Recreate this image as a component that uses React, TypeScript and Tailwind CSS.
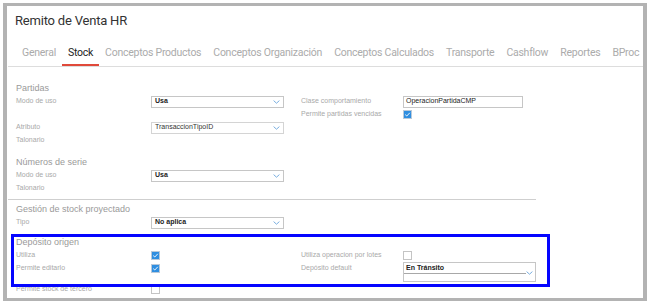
import React from "react";

const lab = "h-[13px] flex items-center text-[7px] text-[#a9a9a9] whitespace-nowrap";
const cell = "h-[13px] flex items-center";
const secTitle = "h-[12px] flex items-center text-[9px] text-[#9a9a9a] whitespace-nowrap";
const grid = "grid grid-cols-[135px_133px_17px_102px_133px] items-start";

function Chevron() {
  return (
    <svg width="7" height="4" viewBox="0 0 7 4" className="shrink-0">
      <path d="M0.6 0.6 L3.5 3.2 L6.4 0.6" fill="none" stroke="#6aa5dc" strokeWidth="0.9" />
    </svg>
  );
}

function Select({ value, bold = true, light = false }: { value: string; bold?: boolean; light?: boolean }) {
  return (
    <div
      className={
        light
          ? "h-[12px] w-[133px] border border-[#d4d4d4] flex items-center justify-between pl-[3px] pr-[3px]"
          : "h-[12px] w-[133px] border border-[#c6c6c6] flex items-center justify-between pl-[3px] pr-[3px]"
      }
    >
      <span className={bold ? "text-[7px] font-bold text-[#222]" : "text-[7px] text-[#333]"}>{value}</span>
      <Chevron />
    </div>
  );
}

function Check({ checked }: { checked: boolean }) {
  if (!checked)
    return <div className="w-[9px] h-[9px] border border-[#c4c4c4] bg-white" />;
  return (
    <div className="w-[9px] h-[9px] bg-[#2f8ee0] border border-[#b9c9d9] flex items-center justify-center">
      <svg width="7" height="7" viewBox="0 0 7 7">
        <path d="M1.2 3.6 L2.8 5 L5.8 1.8" fill="none" stroke="#ffffff" strokeWidth="0.9" />
      </svg>
    </div>
  );
}

const tabs = [
  "General",
  "Stock",
  "Conceptos Productos",
  "Conceptos Organización",
  "Conceptos Calculados",
  "Transporte",
  "Cashflow",
  "Reportes",
  "BProc",
];

export default function App() {
  return (
    <div className="w-[650px] h-[305px] bg-white pt-[3px] pl-[3px] font-['Liberation_Sans',Arial,sans-serif] overflow-hidden">
      <div className="relative w-[644px] h-[298px] border-t-[3px] border-b-[3px] border-l-[4px] border-r-[4px] border-[#b3b3b3] bg-white overflow-hidden">
        <div className="pl-[8px] pt-[7px] h-[23px] flex items-center font-[Roboto,sans-serif] text-[13px] text-[#333] tracking-[-0.2px]">
          Remito de Venta HR
        </div>
        <div className="mt-[17px] ml-[1px] border-b border-[#dddddd] flex pl-[8px] font-[Roboto,sans-serif] text-[10.5px] tracking-[-0.25px] whitespace-nowrap">
          {tabs.map((t) => (
            <div
              key={t}
              className={
                t === "Stock"
                  ? "px-[6px] pb-[4px] border-b-2 border-[#e0493a] text-[#222] leading-[14px]"
                  : "px-[6px] pb-[4px] border-b-2 border-transparent text-[#ababab] leading-[14px]"
              }
            >
              {t}
            </div>
          ))}
        </div>

        <div className="pl-[9px] pt-[16px]">
          <div className={secTitle}>Partidas</div>
          <div className={grid}>
            <div className={lab}>Modo de uso</div>
            <div className={cell}><Select value="Usa" /></div>
            <div />
            <div className={lab}>Clase comportamiento</div>
            <div className={cell}>
              <div className="h-[12px] w-[120px] border border-[#c6c6c6] flex items-center pl-[2px] text-[7px] text-[#222]">
                OperacionPartidaCMP
              </div>
            </div>

            <div className={lab}></div>
            <div />
            <div />
            <div className={lab}>Permite partidas vencidas</div>
            <div className={cell}><Check checked /></div>

            <div className={lab}>Atributo</div>
            <div className={cell}><Select value="TransaccionTipoID" bold={false} light /></div>
            <div />
            <div />
            <div />

            <div className={lab}>Talonario</div>
            <div />
            <div />
            <div />
            <div />
          </div>

          <div className="mt-[10px]">
            <div className={secTitle}>Números de serie</div>
          </div>
          <div className={grid}>
            <div className={lab}>Modo de uso</div>
            <div className={cell}><Select value="Usa" /></div>
            <div />
            <div />
            <div />
            <div className={lab}>Talonario</div>
            <div />
            <div />
            <div />
            <div />
          </div>

          <div className="mt-[4px] -ml-[8px] w-[528px] h-px bg-[#cfcfcf]" />

          <div className="mt-[4px]">
            <div className={secTitle}>Gestión de stock proyectado</div>
          </div>
          <div className={grid}>
            <div className={lab}>Tipo</div>
            <div className={cell}><Select value="No aplica" /></div>
            <div />
            <div />
            <div />
          </div>

          <div className="mt-[8px]">
            <div className={secTitle}>Depósito origen</div>
          </div>
          <div className={grid}>
            <div className={lab}>Utiliza</div>
            <div className={cell}><Check checked /></div>
            <div />
            <div className={lab}>Utiliza operacion por lotes</div>
            <div className={cell}><Check checked={false} /></div>

            <div className={lab}>Permite editarlo</div>
            <div className={cell}><Check checked /></div>
            <div />
            <div className={lab}>Depósito default</div>
            <div className="relative h-[20px] w-[133px] border border-[#c6c6c6]">
              <div className="pl-[2px] h-[10px] flex items-center text-[7px] font-bold text-[#222]">En Tránsito</div>
              <div className="w-[122px] h-px bg-[#a8a8a8]" />
              <div className="absolute right-[2px] top-[8px]"><Chevron /></div>
            </div>

            <div className="mt-[1px] h-[13px] flex items-center text-[7px] text-[#a9a9a9] whitespace-nowrap">Permite stock de tercero</div>
            <div className="mt-[1px] h-[13px] flex items-center"><Check checked={false} /></div>
            <div />
            <div />
            <div />
          </div>
        </div>

        <div className="absolute left-[4px] top-[228px] w-[539px] h-[53px] border-[3px] border-[#0505ff]" />
      </div>
    </div>
  );
}
